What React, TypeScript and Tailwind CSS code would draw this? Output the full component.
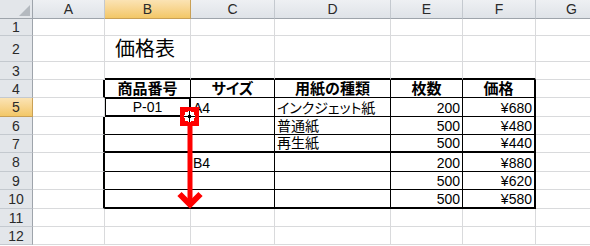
import React from "react";

// 列幅・行高さ (px) — 見出し列/見出し行を含む
const colLetters = ["", "A", "B", "C", "D", "E", "F", "G"];
const rowCount = 12;

type CellText = {
  text: string;
  align: "left" | "center" | "right";
  bold?: boolean;
};

const data: Record<string, CellText> = {
  "4-2": { text: "商品番号", align: "center", bold: true },
  "4-3": { text: "サイズ", align: "center", bold: true },
  "4-4": { text: "用紙の種類", align: "center", bold: true },
  "4-5": { text: "枚数", align: "center", bold: true },
  "4-6": { text: "価格", align: "center", bold: true },
  "5-2": { text: "P-01", align: "center" },
  "5-3": { text: "A4", align: "left" },
  "5-4": { text: "インクジェット紙", align: "left" },
  "5-5": { text: "200", align: "right" },
  "5-6": { text: "¥680", align: "right" },
  "6-4": { text: "普通紙", align: "left" },
  "6-5": { text: "500", align: "right" },
  "6-6": { text: "¥480", align: "right" },
  "7-4": { text: "再生紙", align: "left" },
  "7-5": { text: "500", align: "right" },
  "7-6": { text: "¥440", align: "right" },
  "8-3": { text: "B4", align: "left" },
  "8-5": { text: "200", align: "right" },
  "8-6": { text: "¥880", align: "right" },
  "9-5": { text: "500", align: "right" },
  "9-6": { text: "¥620", align: "right" },
  "10-5": { text: "500", align: "right" },
  "10-6": { text: "¥580", align: "right" },
};

const rightBorder = (r: number, c: number) => {
  const inTable = r >= 4 && r <= 10;
  if (inTable && c === 1)
    return r === 5 ? "border-r border-r-[#d9dadc]" : "border-r-2 border-r-black";
  if (inTable && c >= 2 && c <= 5) return "border-r border-r-black";
  if (inTable && c === 6) return "border-r-2 border-r-black";
  return "border-r border-r-[#d9dadc]";
};

const bottomBorder = (r: number, c: number) => {
  const tableCol = c >= 2 && c <= 6;
  if (tableCol && (r === 3 || r === 7 || r === 10)) return "border-b-2 border-b-black";
  if (tableCol && r >= 4 && r <= 9) return "border-b border-b-black";
  return "border-b border-b-[#d9dadc]";
};

const alignClass = {
  left: "justify-start pl-[2px]",
  center: "justify-center",
  right: "justify-end pr-[2px]",
};

const ColumnHeader: React.FC<{ c: number }> = ({ c }) => {
  if (c === 0) {
    return (
      <div className="bg-[#e3e6ea] border-r border-r-[#9ea4ab] border-b border-b-[#9ea4ab] flex items-end justify-end p-[2px]">
        <svg width="11" height="11" viewBox="0 0 11 11">
          <polygon points="11,0 11,11 0,11" fill="#b4b9bf" />
        </svg>
      </div>
    );
  }
  const selected = c === 2;
  return (
    <div
      className={
        selected
          ? "bg-gradient-to-b from-[#fbe3b4] to-[#f3c766] border-r border-r-[#c9a055] border-b border-b-[#c9a055] flex items-center justify-center"
          : "bg-gradient-to-b from-[#eef0f3] to-[#dfe3e8] border-r border-r-[#c4c9cf] border-b border-b-[#9ea4ab] flex items-center justify-center"
      }
    >
      <span className="text-[14px] leading-none text-[#2a2a2a]">{colLetters[c]}</span>
    </div>
  );
};

const RowHeader: React.FC<{ r: number }> = ({ r }) => {
  const selected = r === 5;
  return (
    <div
      className={
        selected
          ? "bg-gradient-to-b from-[#fbe3b4] to-[#f3c766] border-r border-r-[#c9a055] border-b border-b-[#c9a055] flex items-center justify-center"
          : "bg-[#e3e6ea] border-r border-r-[#9ea4ab] border-b border-b-[#c4c9cf] flex items-center justify-center"
      }
    >
      <span className="text-[14px] leading-none text-[#2a2a2a]">{r}</span>
    </div>
  );
};

const Cell: React.FC<{ r: number; c: number }> = ({ r, c }) => {
  const cls = `${rightBorder(r, c)} ${bottomBorder(r, c)} flex items-end overflow-visible whitespace-nowrap`;

  // タイトル
  if (r === 2 && c === 2) {
    return (
      <div className={`${cls} pl-[10px]`}>
        <span className="text-[20px] leading-[24px] text-black">価格表</span>
      </div>
    );
  }

  // アクティブセル (B5)
  if (r === 5 && c === 2) {
    return (
      <div className={cls}>
        <div className="h-full w-full border border-black flex items-end justify-center">
          <span className="text-[14px] leading-[16px] text-black">P-01</span>
        </div>
      </div>
    );
  }

  const d = data[`${r}-${c}`];
  return (
    <div className={`${cls} ${d ? alignClass[d.align] : ""}`}>
      {d && (
        <span
          className={
            d.bold
              ? "text-[15px] leading-[17px] font-bold text-black"
              : "text-[14px] leading-[16px] text-black"
          }
        >
          {d.text}
        </span>
      )}
    </div>
  );
};

const App: React.FC = () => {
  return (
    <div className="relative w-[590px] h-[246px] overflow-hidden bg-white font-['Liberation_Sans','Noto_Sans_CJK_JP',sans-serif] [font-feature-settings:'palt']">
      {/* Sheet */}
      <div className="grid grid-cols-[33px_72px_86px_84px_116px_72px_73px_72px] grid-rows-[19px_17px_26px_18px_18px_19px_18px_18px_19px_18px_19px_18px_18px]">
        {colLetters.map((_, c) => (
          <ColumnHeader key={`h-${c}`} c={c} />
        ))}
        {Array.from({ length: rowCount }, (_, i) => i + 1).map((r) => (
          <React.Fragment key={`r-${r}`}>
            <RowHeader r={r} />
            {[1, 2, 3, 4, 5, 6, 7].map((c) => (
              <Cell key={`${r}-${c}`} r={r} c={c} />
            ))}
          </React.Fragment>
        ))}
      </div>

      {/* Annotation: fill-handle cursor + red drag arrow */}
      <svg className="absolute left-0 top-0 pointer-events-none" width="590" height="246" viewBox="0 0 590 246">
        <rect x="182.5" y="109.5" width="14" height="14" fill="#ffffff" stroke="#ff0000" strokeWidth="5" />
        <g stroke="#ffffff" strokeWidth="3">
          <line x1="189.5" y1="111" x2="189.5" y2="122" />
          <line x1="184" y1="116.5" x2="195" y2="116.5" />
        </g>
        <g stroke="#000000" strokeWidth="1">
          <line x1="189.5" y1="111" x2="189.5" y2="122" />
          <line x1="184" y1="116.5" x2="195" y2="116.5" />
        </g>
        <rect x="188" y="115" width="3" height="3" fill="#000000" />
        <line x1="190" y1="126" x2="190" y2="204" stroke="#ff0000" strokeWidth="5" />
        <polyline
          points="179.5,194 190,204.5 200.5,194"
          fill="none"
          stroke="#ff0000"
          strokeWidth="6"
          strokeLinejoin="miter"
        />
      </svg>
    </div>
  );
};

export default App;
